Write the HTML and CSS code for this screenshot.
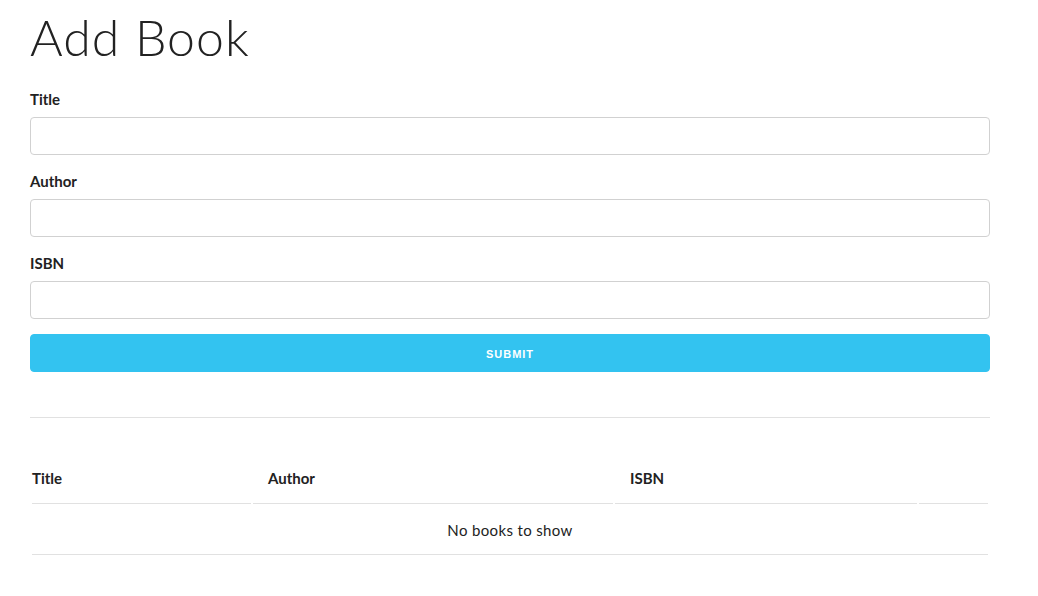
FILE: index.html
```html
<!DOCTYPE html>
<html lang="en">
<head>
<meta charset="utf-8">
<title>Add Book</title>
<link rel="stylesheet" href="styles.css">
</head>
<body>
<div class="container">
  <h1 class="page-title">Add Book</h1>
  <form class="book-form">
    <label class="field-label" for="title">Title</label>
    <input class="field-input" id="title" type="text">
    <label class="field-label" for="author">Author</label>
    <input class="field-input" id="author" type="text">
    <label class="field-label" for="isbn">ISBN</label>
    <input class="field-input" id="isbn" type="text">
    <button class="submit-btn" type="submit">Submit</button>
  </form>
  <hr class="divider">
  <table class="books">
    <thead>
      <tr>
        <th class="col-title">Title</th>
        <th class="col-author">Author</th>
        <th class="col-isbn">ISBN</th>
        <th class="col-action"></th>
      </tr>
    </thead>
    <tbody>
      <tr>
        <td class="empty" colspan="4">No books to show</td>
      </tr>
    </tbody>
  </table>
</div>
</body>
</html>
```

FILE: styles.css
```css
html, body {
  margin: 0;
  padding: 0;
  background: #fff;
}
body {
  font-family: Lato, "Open Sans", sans-serif;
  font-size: 15px;
  line-height: 1.6;
  color: #222;
}
.container {
  width: 960px;
  margin-left: 30px;
  padding-top: 8px;
}
.page-title {
  margin: 0 0 20px 0;
  font-size: 50px;
  line-height: 1.2;
  font-weight: 300;
  letter-spacing: 1px;
  color: #222;
  position: relative;
  top: -1px;
}
.book-form {
  margin: 0;
  display: flex;
  flex-direction: column;
}
.field-label {
  display: block;
  font-weight: 700;
  margin-bottom: 5px;
  height: 24px;
  line-height: 22px;
}
.field-input {
  box-sizing: border-box;
  height: 38px;
  padding: 6px 10px;
  border: 1px solid #D1D1D1;
  border-radius: 4px;
  background: #fff;
  margin: 0 0 15px 0;
  width: 100%;
  font: inherit;
}
.submit-btn {
  box-sizing: border-box;
  height: 38px;
  width: 100%;
  padding: 0 30px;
  border: 1px solid #33C3F0;
  border-radius: 4px;
  background: #33C3F0;
  color: #fff;
  font-family: "Liberation Sans", Arial, sans-serif;
  font-size: 11px;
  font-weight: 700;
  letter-spacing: 1px;
  text-transform: uppercase;
  line-height: 38px;
  text-align: center;
  margin: 0;
}
.divider {
  margin: 45px 0 35px 0;
  border: 0;
  border-top: 1px solid #E1E1E1;
  height: 0;
}
.books {
  width: 960px;
  border-spacing: 2px;
  table-layout: fixed;
}
.books th, .books td {
  padding: 12px 15px;
  border-bottom: 1px solid #E1E1E1;
  line-height: 24px;
  text-align: left;
}
.books th:first-child {
  padding-left: 0;
}
.books th {
  font-weight: 700;
  line-height: 22px;
  padding-bottom: 14px;
}
.col-title { width: 219px; box-sizing: border-box; }
.col-author { width: 360px; box-sizing: border-box; }
.col-isbn { width: 302px; box-sizing: border-box; }
.col-action { width: 69px; box-sizing: border-box; }
.books td.empty {
  text-align: center;
  letter-spacing: 0.35px;
}
```
